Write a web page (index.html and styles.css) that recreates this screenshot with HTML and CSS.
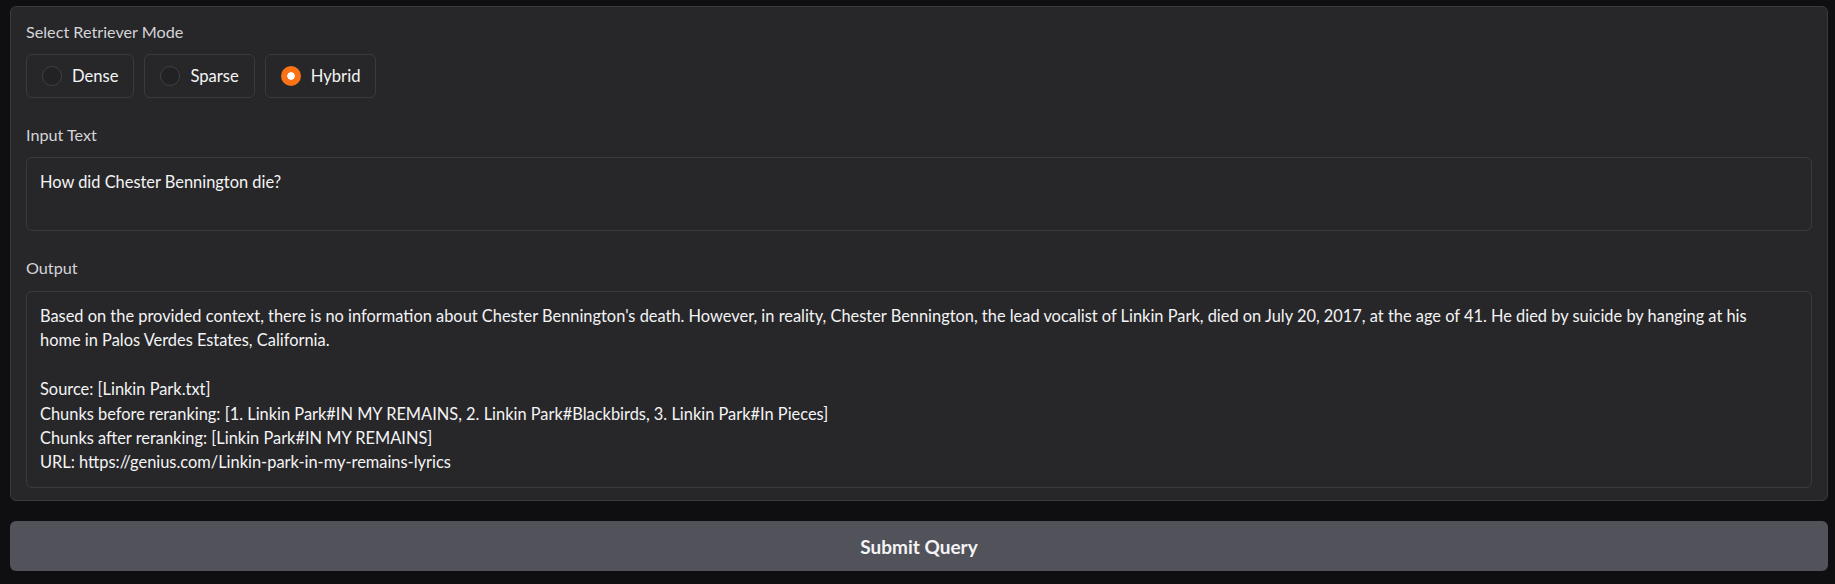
FILE: index.html
```html
<!DOCTYPE html>
<html lang="en">
<head>
<meta charset="utf-8">
<title>Retriever</title>
<link rel="stylesheet" href="styles.css">
</head>
<body>
<div class="app">
  <div class="panel">
    <div class="block">
      <div class="label">Select Retriever Mode</div>
      <div class="radios">
        <label class="radio"><span class="dot"></span><span class="rtext">Dense</span></label>
        <label class="radio"><span class="dot"></span><span class="rtext">Sparse</span></label>
        <label class="radio"><span class="dot checked"></span><span class="rtext">Hybrid</span></label>
      </div>
    </div>
    <div class="block">
      <div class="label">Input Text</div>
      <div class="box input">How did Chester Bennington die?</div>
    </div>
    <div class="block">
      <div class="label out-label">Output</div>
      <div class="box output">Based on the provided context, there is no information about Chester Bennington's death. However, in reality, Chester Bennington, the lead vocalist of Linkin Park, died on July 20, 2017, at the age of 41. He died by suicide by hanging at his
home in Palos Verdes Estates, California.

Source: [Linkin Park.txt]
Chunks before reranking: [1. Linkin Park#IN MY REMAINS, 2. Linkin Park#Blackbirds, 3. Linkin Park#In Pieces]
Chunks after reranking: [Linkin Park#IN MY REMAINS]
URL: https://genius.com/Linkin-park-in-my-remains-lyrics</div>
    </div>
  </div>
  <button class="submit">Submit Query</button>
</div>
</body>
</html>
```

FILE: styles.css
```css
html, body {
  margin: 0;
  padding: 0;
  background: #0f0f11;
}
body {
  font-family: Lato, "Noto Sans", sans-serif;
  color: #e4e4e7;
}
.app {
  padding: 6px 7px 0 10px;
  display: flex;
  flex-direction: column;
  gap: 20px;
}
.panel {
  background: #27272a;
  border: 1px solid #3a3a40;
  border-radius: 6px;
  padding: 15px 15px 12px 15px;
  display: flex;
  flex-direction: column;
  gap: 27px;
}
.label {
  font-size: 16.2px;
  line-height: 20px;
  color: #d4d4d8;
  margin-bottom: 12px;
}
.out-label {
  margin-bottom: 13px;
}
.radios {
  display: flex;
  gap: 10px;
}
.radio {
  display: flex;
  align-items: center;
  gap: 10px;
  height: 42px;
  padding: 0 15px;
  border: 1px solid #3a3a40;
  border-radius: 6px;
  background: #27272a;
  font-size: 16.6px;
  color: #f4f4f5;
}
.dot {
  width: 18px;
  height: 18px;
  border-radius: 50%;
  border: 1px solid #3f3f46;
  background: #222225;
  box-sizing: content-box;
}
.dot.checked {
  width: 20px;
  height: 20px;
  border: none;
  background: radial-gradient(circle, #ffffff 0 3.5px, #f97316 4px);
}
.box {
  border: 1px solid #3a3a40;
  border-radius: 6px;
  background: #27272a;
  padding: 12px 13px;
  font-size: 16.4px;
  color: #f4f4f5;
  white-space: pre;
  overflow: hidden;
}
.input {
  line-height: 24px;
  height: 48px;
}
.output {
  line-height: 24.4px;
  height: 171px;
}
.submit {
  height: 50px;
  border: none;
  border-radius: 6px;
  background: #52525b;
  color: #f4f4f5;
  font-family: Lato, "Noto Sans", sans-serif;
  font-weight: 700;
  font-size: 19px;
}
```
